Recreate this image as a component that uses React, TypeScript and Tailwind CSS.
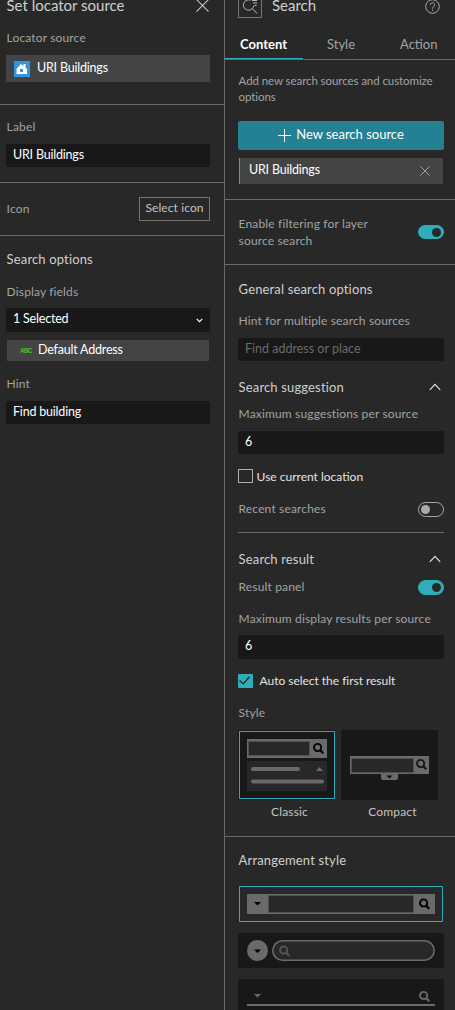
import type { ReactNode } from "react"
import clsx from "clsx"

function Row({ className, children }: { className?: string; children: ReactNode }) {
  return (
    <div className={clsx("flex items-center indent-[0.6px] tracking-[0.15px] whitespace-nowrap", className)}>
      {children}
    </div>
  )
}

function Label({ className, children }: { className?: string; children: ReactNode }) {
  return <Row className={clsx("h-[18px] text-[12px] text-[#a3a3a3]", className)}>{children}</Row>
}

function Heading({ className, children }: { className?: string; children: ReactNode }) {
  return <Row className={clsx("h-[18px] text-[13px] text-[#cfcfcf]", className)}>{children}</Row>
}

function Input({ className, children }: { className?: string; children: ReactNode }) {
  return (
    <div
      className={clsx(
        "flex items-center rounded-[2px] bg-[#181818] pl-[7px] text-[12.5px] tracking-[-0.2px] whitespace-nowrap text-white",
        className
      )}
    >
      {children}
    </div>
  )
}

function Close({ size, className }: { size: number; className?: string }) {
  return (
    <svg width={size} height={size} viewBox="0 0 12 12" fill="none" stroke="currentColor" className={className}>
      <path d="M0.4 0.4l11.2 11.2M11.6 0.4L0.4 11.6" />
    </svg>
  )
}

function Toggle({ on, className }: { on?: boolean; className?: string }) {
  return (
    <div
      className={clsx(
        "flex w-[26px] shrink-0 items-center rounded-full border",
        on ? "justify-end border-[#30adbb] bg-[#30adbb] pr-[2px]" : "border-[#a9a9a9] pl-[2px]",
        className
      )}
    >
      <div className={clsx("h-[9px] w-[9px] rounded-full", on ? "bg-[#282828]" : "bg-[#a9a9a9]")} />
    </div>
  )
}

function ChevronUp() {
  return (
    <svg width="12" height="8" viewBox="0 0 12 8" fill="none" stroke="#e0e0e0" strokeWidth="1.2">
      <path d="M0.8 6.8L6 1.4l5.2 5.4" />
    </svg>
  )
}

function Magnifier({ x, y, color }: { x: number; y: number; color: string }) {
  return (
    <g transform={`translate(${x} ${y})`} fill="none" stroke={color}>
      <circle cx="4.6" cy="4.5" r="3.6" strokeWidth="1.9" />
      <path d="M7 7l3.2 3.2" strokeWidth="2.3" />
    </g>
  )
}

export default function App() {
  return (
    <main className="flex h-[1010px] w-[455px] overflow-hidden bg-[#282828] font-['Lato',sans-serif] text-[13px] leading-[18px]">
      {/* Locator source panel */}
      <aside className="w-[225px] shrink-0 border-r border-[#696969]">
        <section className="h-[105px] border-b border-[#696969] px-[6px]">
          <div className="flex h-[10px] items-center justify-between pr-[9px] pl-[0.5px] text-[15px] whitespace-nowrap text-[#cfcfcf]">
            <span>Set locator source</span>
            <Close size={13} className="text-[#c4c4c4]" />
          </div>
          <Label className="mt-[19px]">Locator source</Label>
          <div className="mt-[8px] flex h-[27px] w-[204px] items-center bg-[#444444] pl-[8px] text-[12.5px] tracking-[-0.2px] text-white">
            <svg width="16" height="16" viewBox="0 0 16 16" className="mr-[7px]">
              <path fill="#3395db" d="M0 0h16v16H0z" />
              <path fill="#fff" d="M2 8.5L7 3l2.5 2V3h2v3.6L13.5 9H13v4H2.5V8.5z" />
              <path fill="#3395db" d="M6 8h3v3H6z" />
            </svg>
            <span className="pb-[2px]">URI Buildings</span>
          </div>
        </section>

        <section className="h-[78px] border-b border-[#696969] px-[6px] pt-[13px]">
          <Label>Label</Label>
          <Input className="mt-[8px] h-[23px] w-[204px] pb-px">URI Buildings</Input>
        </section>

        <section className="flex h-[53px] items-center justify-between border-b border-[#696969] pr-[14px] pl-[6px]">
          <Label>Icon</Label>
          <button className="flex h-[24px] w-[71px] items-center justify-center border border-[#757575] pb-[2px] text-[12px] tracking-[0.1px] whitespace-nowrap text-[#c4c4c4]">
            Select icon
          </button>
        </section>

        <section className="px-[6px] pt-[14px]">
          <Heading>Search options</Heading>
          <Label className="mt-[15px]">Display fields</Label>
          <Input className="mt-[7px] h-[24px] w-[204px] justify-between pr-[7px]">
            <span className="pb-[3px]">1 Selected</span>
            <svg width="7" height="5" viewBox="0 0 7 5" fill="none" stroke="#fff" strokeWidth="1.2">
              <path d="M0.7 0.8l2.8 2.8L6.3 0.8" />
            </svg>
          </Input>
          <div className="mt-[8px] ml-px flex h-[21px] w-[202px] items-center bg-[#444444] text-[12.5px] tracking-[-0.2px] text-white">
            <span className="ml-[13px] w-[18px] font-['Roboto',sans-serif] text-[7px] font-medium tracking-[-0.6px] text-[#4ec52b]">
              ABC
            </span>
            <span className="pb-px">Default Address</span>
          </div>
          <Label className="mt-[14px]">Hint</Label>
          <Input className="mt-[8px] h-[23px] w-[204px] pb-px">Find building</Input>
        </section>
      </aside>

      {/* Search widget settings */}
      <aside className="min-w-0 flex-1">
        <header className="flex h-[18px] items-end pr-[15px] pl-[13px]">
          <div className="h-[24px] w-[24px] shrink-0 border border-[#777777]">
            <svg width="22" height="22" viewBox="0 0 22 22" fill="none" stroke="#b9b9b9">
              <path d="M11.5 5.2a5.2 5.2 0 1 0 3.2 5.6M13.2 13.8l5 4.6M13 5.5h5M14 8h4M15.5 10.5h2" />
            </svg>
          </div>
          <span className="mb-[3px] ml-[10px] text-[15px] leading-[20px] text-[#cfcfcf]">Search</span>
          <svg width="15" height="15" viewBox="0 0 15 15" fill="none" stroke="#aaaaaa" className="mb-[4px] ml-auto">
            <circle cx="7.5" cy="7.5" r="6.8" />
            <path d="M5.4 5.9a2.1 2.1 0 1 1 3.4 1.6c-.9.6-1.3 1-1.3 2M7.5 10.6v1.2" />
          </svg>
        </header>

        <nav className="flex h-[42px] border-b border-[#696969] leading-[18px] text-[#a3a3a3]">
          <div className="w-[78px] border-b border-[#30adbb] pt-[17px] pl-[15px] font-bold text-white">Content</div>
          <div className="w-[76px] pt-[17px] pl-[24px]">Style</div>
          <div className="pt-[17px] pl-[21px]">Action</div>
        </nav>

        <section className="h-[140px] border-b border-[#696969] pt-[13px] pl-[13px]">
          <p className="pl-[0.6px] text-[11.5px] leading-[16px] tracking-[-0.08px] whitespace-nowrap text-[#a3a3a3]">
            Add new search sources and customize
            <br />
            options
          </p>
          <button className="mt-[16px] flex h-[29px] w-[206px] items-center justify-center rounded-[2px] bg-[#248093] whitespace-nowrap text-white">
            <svg width="13" height="13" viewBox="0 0 13 13" stroke="#fff" className="mr-[5px]">
              <path d="M6.5 0v13M0 6.5h13" />
            </svg>
            <span className="pb-[3px]">New search source</span>
          </button>
          <div className="mt-[8px] ml-px flex h-[26px] w-[204px] items-center justify-between border-l border-[#30adbb] bg-[#444444] pr-[13px] pl-[9px] text-[12.5px] tracking-[-0.2px] text-white">
            <span className="pb-[2px]">URI Buildings</span>
            <Close size={10} className="text-[#b5b5b5]" />
          </div>
        </section>

        <section className="flex h-[65px] items-center justify-between border-b border-[#696969] pr-[11px] pl-[13px]">
          <p className="pl-[0.6px] text-[12px] leading-[17px] tracking-[0.15px] whitespace-nowrap text-[#a3a3a3]">
            Enable filtering for layer
            <br />
            source search
          </p>
          <Toggle on className="h-[14px]" />
        </section>

        <section className="h-[572px] border-b border-[#696969] pt-[15px] pr-[11px] pl-[13px]">
          <Heading>General search options</Heading>
          <Label className="mt-[14px]">Hint for multiple search sources</Label>
          <Input className="mt-[8px] h-[23px] pb-[2px]">
            <span className="tracking-normal text-[#6a6a6a]">Find address or place</span>
          </Input>
          <Heading className="mt-[17px] justify-between pr-[3px]">
            <span>Search suggestion</span>
            <ChevronUp />
          </Heading>
          <Label className="mt-[9px]">Maximum suggestions per source</Label>
          <Input className="mt-[8px] h-[23px] pb-px">6</Input>
          <Row className="mt-[14px] h-[18px] text-[12px] text-[#e4e4e4]">
            <span className="mr-[3px] mb-[2px] h-[14px] w-[15px] border border-[#b0b0b0]" />
            <span className="tracking-normal">Use current location</span>
          </Row>
          <Label className="mt-[14px] justify-between">
            <span>Recent searches</span>
            <Toggle className="h-[15px]" />
          </Label>
          <hr className="mt-[14px] border-[#696969]" />
          <Heading className="mt-[17px] justify-between pr-[3px]">
            <span>Search result</span>
            <ChevronUp />
          </Heading>
          <Label className="mt-[10px] justify-between">
            <span>Result panel</span>
            <Toggle on className="h-[15px]" />
          </Label>
          <Label className="mt-[14px]">Maximum display results per source</Label>
          <Input className="mt-[7px] h-[24px] pb-[2px]">6</Input>
          <Row className="mt-[13px] h-[18px] text-[12px] text-[#e4e4e4]">
            <svg width="15" height="14" viewBox="0 0 15 14" className="mr-[6px]">
              <rect width="15" height="14" rx="1" fill="#30adbb" />
              <path d="M1.5 6.5l3.8 3.3L11.5 2.8" fill="none" stroke="#282828" strokeWidth="1.3" />
            </svg>
            <span className="tracking-[-0.03px]">Auto select the first result</span>
          </Row>
          <Label className="mt-[14px]">Style</Label>
          <div className="mt-[8px] flex gap-[6px] text-center text-[12px] tracking-[0.15px] text-[#c4c4c4]">
            <div className="w-[97px]">
              <svg width="97" height="70" viewBox="0 0 97 70">
                <rect width="97" height="70" rx="1" fill="#181818" />
                <rect x="1.5" y="1.5" width="95" height="67" fill="none" stroke="#30adbb" />
                <path fill="#6a6a6a" d="M9 9h80v19H9z" />
                <path fill="#282828" stroke="#505050" d="M10.5 11.5h61v14h-61z" />
                <Magnifier x={75} y={13} color="#000" />
                <path fill="#282828" d="M9 31h80v30H9z" />
                <path stroke="#6a6a6a" strokeWidth="4" strokeLinecap="round" d="M15 39h45M15 51.5h69" />
                <path fill="#6a6a6a" d="M78 41l3.5-4 3.5 4z" />
              </svg>
              <div className="mt-[3px] pl-[6px]">Classic</div>
            </div>
            <div className="w-[97px]">
              <svg width="97" height="70" viewBox="0 0 97 70">
                <rect width="97" height="70" rx="1" fill="#181818" />
                <path fill="#6a6a6a" d="M9 26h79v18H9zM40 44h17v4a2 2 0 0 1-2 2H42a2 2 0 0 1-2-2z" />
                <path fill="#282828" stroke="#505050" d="M10.5 28.5h62v14h-62z" />
                <Magnifier x={75} y={29} color="#181818" />
                <path fill="#000" d="M45.5 45.5h6l-3 3z" />
              </svg>
              <div className="mt-[3px] pl-[6px]">Compact</div>
            </div>
          </div>
        </section>

        <section className="pt-[14px] pl-[13px]">
          <Heading>Arrangement style</Heading>
          <svg width="206" height="36" viewBox="0 0 206 36" className="mt-[17px]">
            <path fill="none" stroke="#30adbb" d="M1.5 0.5h203v35H1.5z" />
            <path fill="#6a6a6a" d="M9 8h188v20H9z" />
            <path fill="#282828" stroke="#505050" d="M30.5 9.5h145v17h-145z" />
            <path fill="#000" d="M16 16h7l-3.5 3.5z" />
            <Magnifier x={181} y={12.5} color="#000" />
          </svg>
          <svg width="206" height="35" viewBox="0 0 206 35" className="mt-[11px]">
            <rect width="206" height="35" rx="1" fill="#181818" />
            <circle cx="19.5" cy="17.5" r="10.5" fill="#6a6a6a" />
            <path fill="#000" d="M16 16.5h7L19.5 20z" />
            <rect x="34.8" y="7.8" width="161.4" height="19.4" rx="9.7" fill="#282828" stroke="#6a6a6a" strokeWidth="1.6" />
            <Magnifier x={41} y={12.5} color="#555555" />
          </svg>
          <svg width="206" height="35" viewBox="0 0 206 35" className="mt-[11px]">
            <rect width="206" height="35" rx="1" fill="#181818" />
            <path fill="#6a6a6a" d="M16 15h7l-3.5 3.5zM9 25h188v2H9z" />
            <Magnifier x={181} y={12} color="#6a6a6a" />
          </svg>
        </section>
      </aside>
    </main>
  )
}
